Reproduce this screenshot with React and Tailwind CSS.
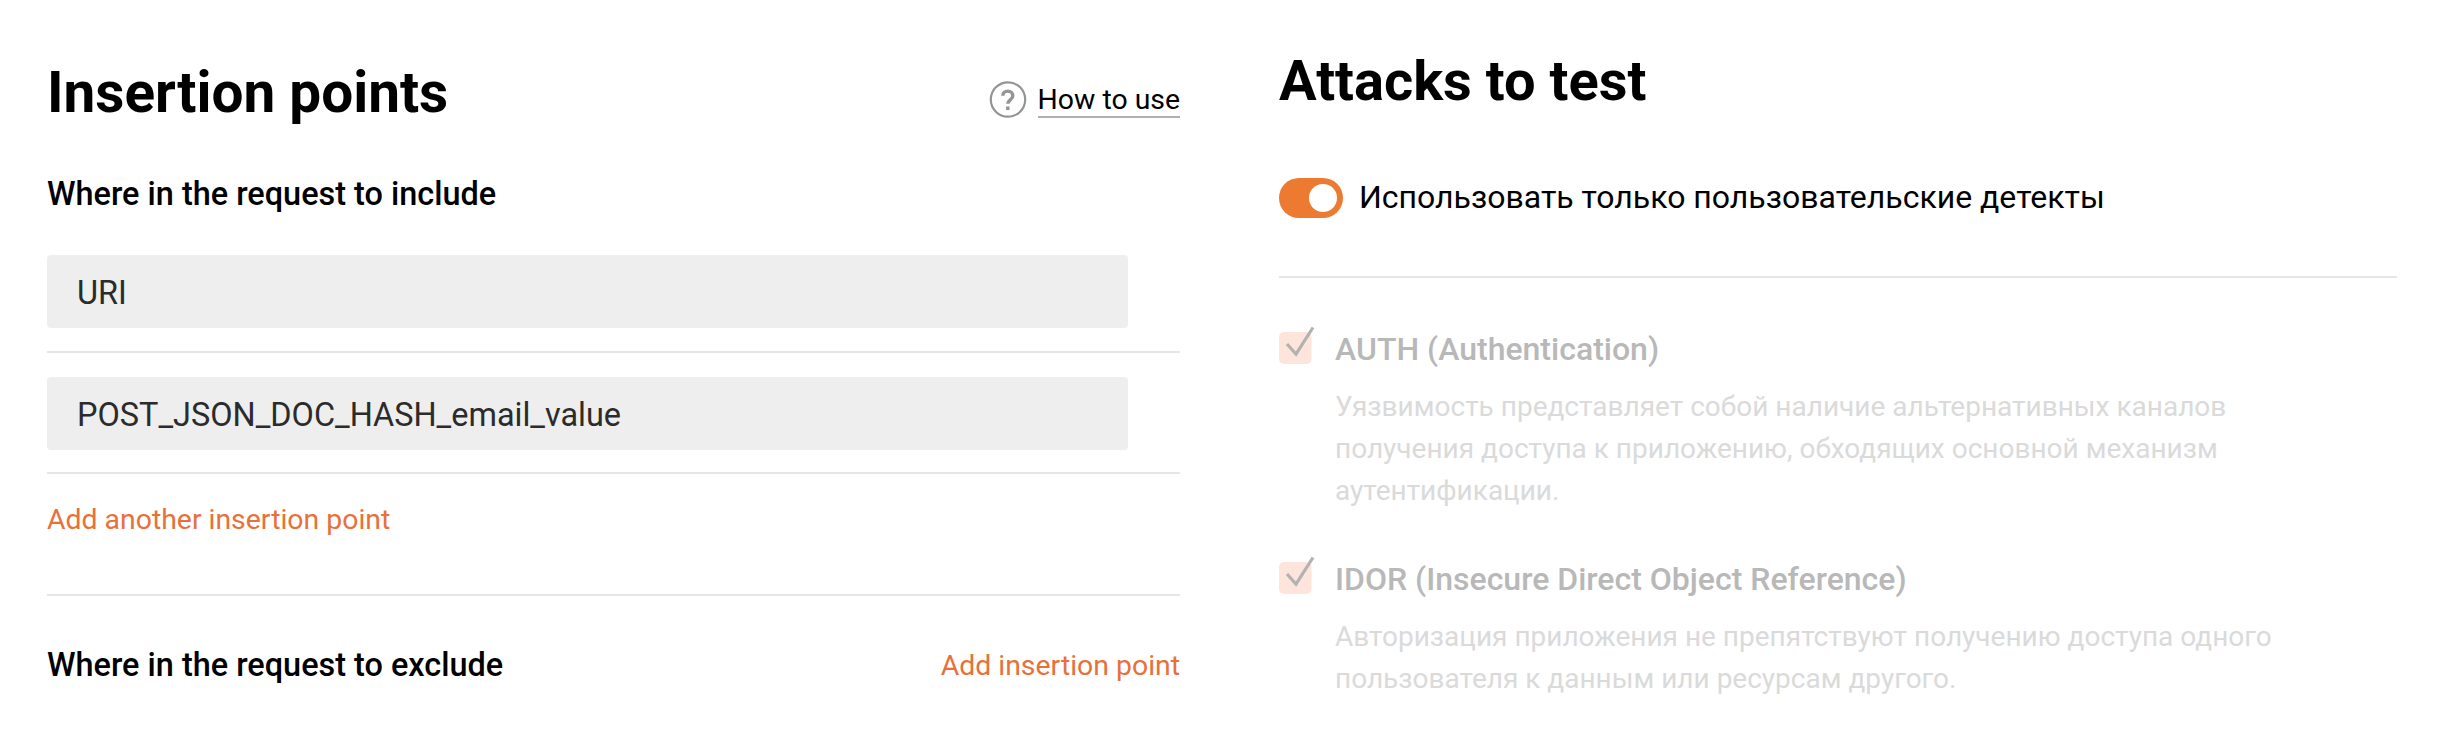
const Divider = ({ className = "" }) => <div className={"h-[2px] bg-[#e6e6e6] " + className} />;

function Field({ children }) {
  return <div className="h-[73px] w-[1081px] rounded-[4px] bg-[#eeeeee] pl-[30px] text-[32.45px] leading-[77px] text-[#2b2b2b]">{children}</div>;
}

function Attack({ title, lines, className }) {
  return (
    <div className={"flex " + className}>
      <svg className="mt-[-3px] h-[42px] w-[38px] shrink-0" viewBox="0 0 38 42" fill="none">
        <rect x="0" y="6" width="32.5" height="32" rx="5" fill="#fee5db" />
        <path d="M8 18L17 28L34 1.5" stroke="#b2b2b2" strokeWidth="3.2" />
      </svg>
      <div className="ml-[18px] whitespace-nowrap">
        <div className="text-[32px] font-medium leading-[40px] text-[#b8b8b8]">{title}</div>
        <div className="mt-[17px] text-[28px] leading-[42px] text-[#dadada]">
          {lines.map((l) => <div key={l}>{l}</div>)}
        </div>
      </div>
    </div>
  );
}

export default function App() {
  return (
    <div className="flex h-[732px] w-[2451px] overflow-hidden bg-white font-['Roboto',sans-serif] text-black">
      <section className="ml-[47px] w-[1133px]">
        <div className="flex justify-between pt-[60px]">
          <h1 className="text-[56.7px] font-bold leading-[66px]">Insertion points</h1>
          <div className="mt-[20px] flex h-[40px] items-center gap-[11px]">
            <svg className="size-[38px]" viewBox="0 0 38 38" fill="none">
              <circle cx="19" cy="18.5" r="17.2" stroke="#949494" strokeWidth="2.2" />
              <path d="M13.8 14.8c0-6.2 10-6.2 10 0c0 4-5 4-5 8M18.8 25.5v3.5" stroke="#949494" strokeWidth="3.4" />
            </svg>
            <span className="border-b-2 border-[#b0b0b0] pt-[2px] text-[28.4px] leading-[32px]">How to use</span>
          </div>
        </div>
        <h2 className="mt-[48px] text-[32.45px] font-medium leading-[40px]">Where in the request to include</h2>
        <div className="mt-[41px]"><Field>URI</Field></div>
        <Divider className="mt-[23px]" />
        <div className="mt-[24px]"><Field>POST_JSON_DOC_HASH_email_value</Field></div>
        <Divider className="mt-[22px]" />
        <div className="mt-[26px] text-[28.4px] leading-[40px] text-[#e8703a]">Add another insertion point</div>
        <Divider className="mt-[54px]" />
        <div className="mt-[49px] flex justify-between leading-[40px]">
          <h2 className="text-[32.45px] font-medium">Where in the request to exclude</h2>
          <span className="mt-px text-[28.4px] text-[#e8703a]">Add insertion point</span>
        </div>
      </section>
      <section className="ml-[99px] w-[1118px]">
        <h1 className="pt-[48px] text-[56px] font-bold leading-[66px]">Attacks to test</h1>
        <div className="mt-[64px] flex h-[40px] items-center gap-[16px]">
          <div className="flex h-[40px] w-[64px] items-center justify-end rounded-full bg-[#ec7a31] pr-[6px]">
            <div className="size-[28px] rounded-full bg-white" />
          </div>
          <span className="pb-[2px] text-[32px]">Использовать только пользовательские детекты</span>
        </div>
        <Divider className="mt-[58px]" />
        <Attack className="mt-[51px]" title="AUTH (Authentication)" lines={["Уязвимость представляет собой наличие альтернативных каналов", "получения доступа к приложению, обходящих основной механизм", "аутентификации."]} />
        <Attack className="mt-[47px]" title="IDOR (Insecure Direct Object Reference)" lines={["Авторизация приложения не препятствуют получению доступа одного", "пользователя к данным или ресурсам другого."]} />
      </section>
    </div>
  );
}
